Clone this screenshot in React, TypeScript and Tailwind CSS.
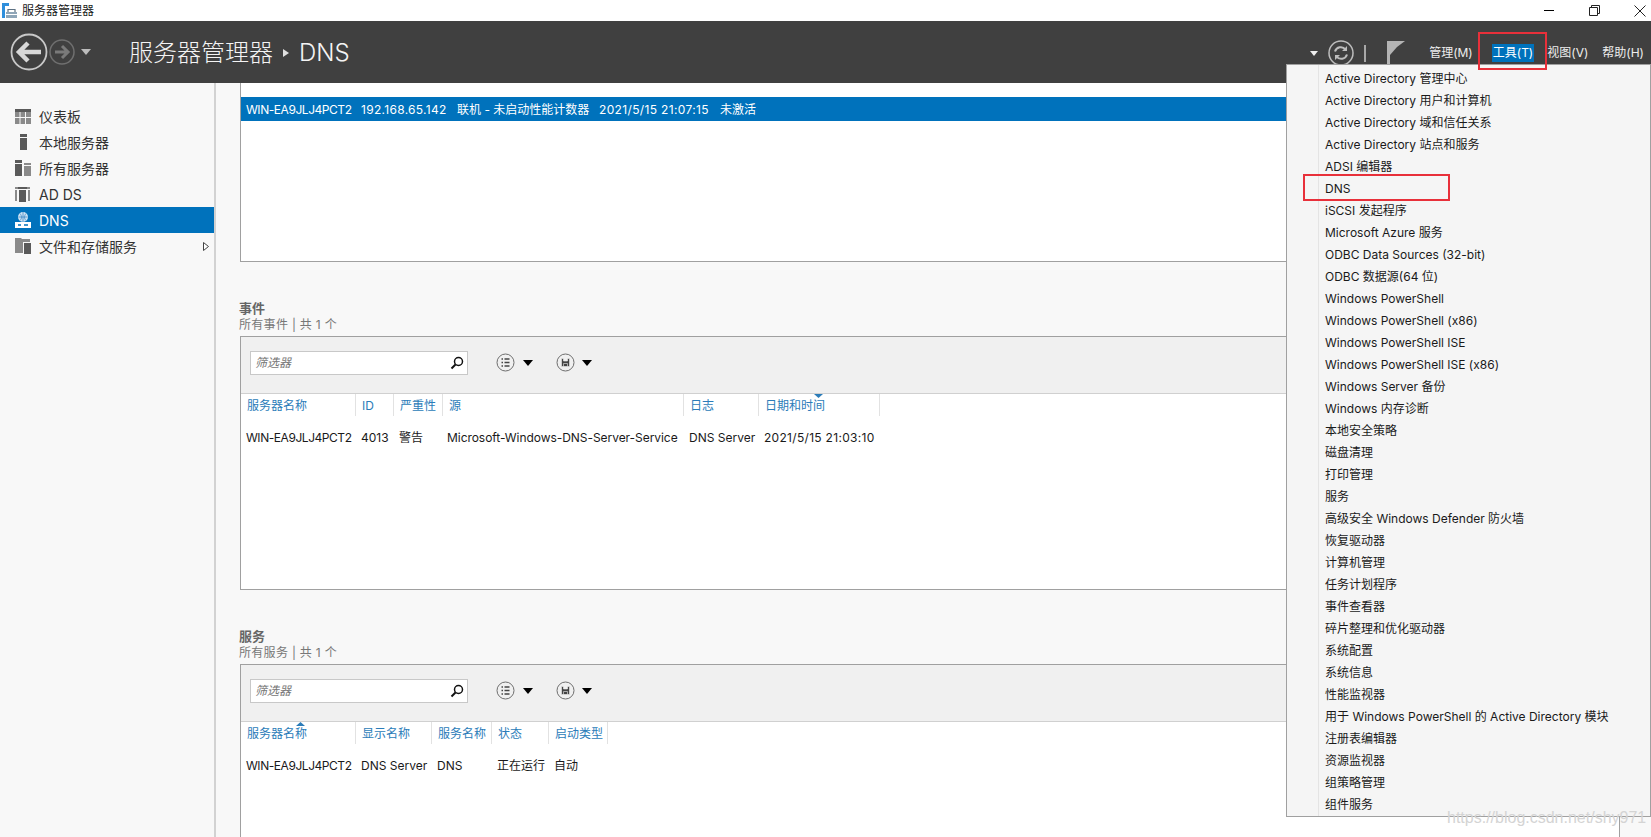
import React from "react"

// Server Manager – DNS page with the Tools menu open

const FONT = 'Inter, "Noto Sans CJK SC", sans-serif'

const NAV_ITEMS = [
  { label: "仪表板", icon: "dash" },
  { label: "本地服务器", icon: "local" },
  { label: "所有服务器", icon: "all" },
  { label: "AD DS", icon: "adds" },
  { label: "DNS", icon: "dns" },
  { label: "文件和存储服务", icon: "files" },
]

const MENU_ITEMS = [
  "Active Directory 管理中心",
  "Active Directory 用户和计算机",
  "Active Directory 域和信任关系",
  "Active Directory 站点和服务",
  "ADSI 编辑器",
  "DNS",
  "iSCSI 发起程序",
  "Microsoft Azure 服务",
  "ODBC Data Sources (32-bit)",
  "ODBC 数据源(64 位)",
  "Windows PowerShell",
  "Windows PowerShell (x86)",
  "Windows PowerShell ISE",
  "Windows PowerShell ISE (x86)",
  "Windows Server 备份",
  "Windows 内存诊断",
  "本地安全策略",
  "磁盘清理",
  "打印管理",
  "服务",
  "高级安全 Windows Defender 防火墙",
  "恢复驱动器",
  "计算机管理",
  "任务计划程序",
  "事件查看器",
  "碎片整理和优化驱动器",
  "系统配置",
  "系统信息",
  "性能监视器",
  "用于 Windows PowerShell 的 Active Directory 模块",
  "注册表编辑器",
  "资源监视器",
  "组策略管理",
  "组件服务",
]

interface Column {
  title: string
  width: number
  cell: string
  cellClass?: string
  sort?: "up" | "down"
}

const EVENT_COLUMNS: Column[] = [
  { title: "服务器名称", width: 115, cell: "WIN-EA9JLJ4PCT2", cellClass: "tracking-[-0.45px]" },
  { title: "ID", width: 38, cell: "4013" },
  { title: "严重性", width: 49, cell: "警告" },
  { title: "源", width: 241, cell: "Microsoft-Windows-DNS-Server-Service", cellClass: "tracking-[-0.05px] ml-[-1px]" },
  { title: "日志", width: 75, cell: "DNS Server" },
  { title: "日期和时间", width: 121, cell: "2021/5/15 21:03:10", cellClass: "tracking-[0.3px]", sort: "down" },
]

const SERVICE_COLUMNS: Column[] = [
  { title: "服务器名称", width: 115, cell: "WIN-EA9JLJ4PCT2", cellClass: "tracking-[-0.45px]", sort: "up" },
  { title: "显示名称", width: 76, cell: "DNS Server" },
  { title: "服务名称", width: 60, cell: "DNS" },
  { title: "状态", width: 57, cell: "正在运行" },
  { title: "启动类型", width: 59, cell: "自动" },
]

function NavIcon({ name }: { name: string }) {
  const c = "#5a5a5a"
  return (
    <svg width="18" height="18" viewBox="0 0 18 18" className="shrink-0">
      {name === "dash" && (
        <>
          <rect x="1" y="2" width="16" height="15" fill="#8a8a8a" />
          <rect x="1" y="2" width="16" height="3" fill={c} />
          <path d="M6 5v12M11.500 5v12M1 10.500h16" stroke="#f7f7f7" strokeWidth="1" />
        </>
      )}
      {name === "local" && (
        <>
          <rect x="6" y="1" width="7" height="3" fill={c} />
          <rect x="6" y="5" width="7" height="12" fill={c} />
        </>
      )}
      {name === "all" && (
        <>
          <rect x="1" y="1" width="7" height="3" fill={c} />
          <rect x="1" y="5" width="7" height="12" fill={c} />
          <rect x="10" y="4" width="7" height="2" fill="#8a8a8a" />
          <rect x="10" y="7" width="7" height="10" fill="#8a8a8a" />
        </>
      )}
      {name === "adds" && (
        <>
          <path d="M1 2h15v2H1zM1 5h2v11H1zM14 5h2v11h-2z" fill="#8a8a8a" />
          <rect x="4" y="2" width="9" height="2" fill={c} />
          <rect x="5" y="5" width="7" height="12" fill={c} />
        </>
      )}
      {name === "dns" && (
        <>
          <circle cx="9" cy="6" r="5" fill="#cfe3f3" />
          <path d="M4.500 6h9M9 1v10M6 2.500c2 2.500 2 5 0 7M12 2.500c-2 2.500-2 5 0 7" stroke="#3f88c5" strokeWidth="0.8" fill="none" />
          <rect x="1" y="11" width="16" height="6" fill="#fff" />
          <path d="M4 14h3M10 14h4" stroke="#0072bc" strokeWidth="1.500" />
        </>
      )}
      {name === "files" && (
        <>
          <path d="M1 1h6l1 1h8v3H1z" fill="#8a8a8a" />
          <rect x="1" y="5" width="8" height="11" fill="#8a8a8a" />
          <rect x="10" y="6" width="7" height="11" fill={c} />
        </>
      )}
    </svg>
  )
}

function Caret({ color = "#000", className = "" }: { color?: string; className?: string }) {
  return (
    <svg width="10" height="6" viewBox="0 0 10 6" className={className}>
      <path d="M0 0h10L5 6z" fill={color} />
    </svg>
  )
}

function CircleButton({ kind }: { kind: "list" | "save" }) {
  return (
    <svg width="19" height="19" viewBox="0 0 19 19">
      <circle cx="9.500" cy="9.500" r="8.500" fill="none" stroke="#6e6e6e" strokeWidth="1" />
      {kind === "list" ? (
        <path
          d="M5.500 6h1.500M5.500 9.500h1.500M5.500 13h1.500M8.500 6h5M8.500 9.500h5M8.500 13h5"
          stroke="#444"
          strokeWidth="1.500"
        />
      ) : (
        <path d="M5.500 5.500h8v8h-8zM7.500 5.500v2.500h4v-2.500M7.500 13.500v-3h4v3" fill="#444" stroke="#f0f0f0" strokeWidth="0.600" />
      )}
    </svg>
  )
}

function Section(props: { title: string; subtitle: string; columns: Column[]; height: string }) {
  return (
    <section className="mt-[38px]">
      <h2 className="text-[13px] leading-4 font-bold text-[#666] ml-[-1px]">{props.title}</h2>
      <p className="text-[12px] leading-4 mt-px tracking-[0.3px] text-[#777] ml-[-1px]">{props.subtitle}</p>
      <div className={`mt-[3px] border border-[#a0a0a0] bg-white ${props.height}`}>
        <div className="flex h-[57px] items-center border-b border-[#d0d0d0] bg-[#f0f0f0] pb-[5px] pl-[9px]">
          <div className="flex h-6 w-[218px] items-center justify-between border border-[#c8c8c8] bg-white pl-1 pr-[3px]">
            <span className="text-[12px] italic text-[#777]">筛选器</span>
            <svg width="14" height="14" viewBox="0 0 14 14">
              <circle cx="8.500" cy="5.500" r="4" fill="none" stroke="#111" strokeWidth="1.500" />
              <path d="M5.500 8.500L1.500 12.500" stroke="#111" strokeWidth="2" />
            </svg>
          </div>
          <div className="ml-[28px] flex items-center gap-[8px]">
            <CircleButton kind="list" />
            <Caret />
          </div>
          <div className="ml-[23px] flex items-center gap-[7px]">
            <CircleButton kind="save" />
            <Caret />
          </div>
        </div>
        <div className="flex h-[22px]">
          {props.columns.map((col) => (
            <div
              key={col.title}
              style={{ width: col.width }}
              className="relative shrink-0 border-r border-[#e2e2e2] pl-[6px] text-[12px] leading-[23px] text-[#2b7cb9]"
            >
              {col.sort && (
                <svg width="9" height="4" viewBox="0 0 9 4" className="absolute left-[55px] top-0">
                  <path d={col.sort === "up" ? "M0 4h9L4.500 0z" : "M0 0h9L4.500 4z"} fill="#2b7cb9" />
                </svg>
              )}
              {col.title}
            </div>
          ))}
        </div>
        <div className="mt-[11px] flex h-[22px]">
          {props.columns.map((col) => (
            <div
              key={col.title}
              style={{ width: col.width }}
              className="shrink-0 whitespace-nowrap pl-[5px] text-[12px] leading-[22px] text-[#1a1a1a]"
            >
              <span className={col.cellClass}>{col.cell}</span>
            </div>
          ))}
        </div>
      </div>
    </section>
  )
}

export default function App() {
  return (
    <div
      className="relative flex h-[837px] w-[1651px] flex-col overflow-hidden bg-white"
      style={{ fontFamily: FONT }}
    >
      {/* Title bar */}
      <div className="flex h-[21px] shrink-0 items-center justify-between bg-white">
        <div className="flex items-center">
          <svg width="16" height="16" viewBox="0 0 16 16" className="ml-[2px]">
            <rect x="0" y="0" width="7" height="3" fill="#2f8fdc" />
            <rect x="0" y="3" width="3" height="12" fill="#2f8fdc" />
            <path d="M4 9h11v6H4z" fill="#8fa6b8" />
            <path d="M6 9V6.500h7V9" fill="none" stroke="#5d7183" strokeWidth="1.200" />
            <path d="M4 11.500h11" stroke="#fff" strokeWidth="1" />
          </svg>
          <span className="ml-[4px] text-[12px] text-[#1a1a1a]">服务器管理器</span>
        </div>
        <div className="flex items-center">
          <span className="h-px w-[10px] bg-black" />
          <svg width="11" height="11" viewBox="0 0 11 11" className="ml-[35px]">
            <path d="M.500 2.500h8v8h-8zM2.500 2.500v-2h8v8h-2" fill="none" stroke="#222" />
          </svg>
          <svg width="12" height="12" viewBox="0 0 12 12" className="mx-[5px] ml-[34px]">
            <path d="M.500.500l11 11M11.500.500l-11 11" stroke="#222" />
          </svg>
        </div>
      </div>

      {/* Header */}
      <header className="flex h-[62px] shrink-0 items-center justify-between bg-[#404040] text-white">
        <div className="flex items-center">
          <svg width="38" height="38" viewBox="0 0 38 38" className="ml-[10px]">
            <circle cx="19" cy="19" r="17.500" fill="none" stroke="#c8c8c8" strokeWidth="1.800" />
            <path d="M31 19H10M18 10l-9 9 9 9" fill="none" stroke="#d8d8d8" strokeWidth="4.500" />
          </svg>
          <svg width="26" height="26" viewBox="0 0 26 26" className="ml-[1px]">
            <circle cx="13" cy="13" r="12" fill="none" stroke="#6f6f6f" strokeWidth="1.500" />
            <path d="M6 13h13M13 7l6 6-6 6" fill="none" stroke="#7a7a7a" strokeWidth="3" />
          </svg>
          <Caret color="#bcbcbc" className="ml-[6px]" />
          <h1 className="ml-[38px] flex items-center pt-[2px] text-[24px] font-light leading-none text-[#f4f4f4]">
            服务器管理器
            <svg width="6" height="8" viewBox="0 0 6 8" className="mx-[10px]">
              <path d="M0 0l6 4-6 4z" fill="#e0e0e0" />
            </svg>
            DNS
          </h1>
        </div>
        <div className="flex items-center pt-[2px] text-[12px] text-[#eee]">
          <svg width="8" height="5" viewBox="0 0 8 5">
            <path d="M0 0h8L4 5z" fill="#eee" />
          </svg>
          <svg width="26" height="26" viewBox="0 0 26 26" className="ml-[10px]">
            <circle cx="13" cy="13" r="12" fill="none" stroke="#bdbdbd" strokeWidth="1.500" />
            <path d="M7 11.500a6 6 0 0 1 10.500-2M19 14.500a6 6 0 0 1-10.500 2" fill="none" stroke="#bdbdbd" strokeWidth="2" />
            <path d="M19 6v5h-5zM7 20v-5h5z" fill="#bdbdbd" />
          </svg>
          <span className="ml-[10px] h-[17px] w-[2px] bg-[#a8a8a8]" />
          <svg width="18" height="24" viewBox="0 0 18 24" className="ml-[21px]">
            <rect x="0" y="0" width="3" height="24" fill="#b4b4b4" />
            <path d="M3 0h15L10 6 3 14z" fill="#b4b4b4" />
          </svg>
          <span className="ml-[24px]">管理(M)</span>
          <span className="ml-[19px] bg-[#0072bc] px-[1px] leading-[18px] text-white">工具(T)</span>
          <span className="ml-[13px]">视图(V)</span>
          <span className="ml-[14px] mr-[7px]">帮助(H)</span>
        </div>
      </header>

      <div className="flex min-h-0 flex-1">
        {/* Sidebar */}
        <nav className="w-[216px] shrink-0 border-r-2 border-[#d2d2d2] bg-[#f8f8f8] pt-[20px]">
          {NAV_ITEMS.map((item) => (
            <div
              key={item.label}
              className={
                item.label === "DNS"
                  ? "flex h-[26px] items-center gap-[7px] bg-[#0072bc] pl-[14px] text-[14px] text-white"
                  : "flex h-[26px] items-center gap-[7px] pl-[14px] text-[14px] text-[#333]"
              }
            >
              <NavIcon name={item.icon} />
              <span className="flex-1">{item.label}</span>
              {item.icon === "files" && (
                <svg width="6" height="9" viewBox="0 0 6 9" className="mr-[5px]">
                  <path d="M.500.500l5 4-5 4z" fill="#fff" stroke="#444" />
                </svg>
              )}
            </div>
          ))}
        </nav>

        {/* Main content */}
        <main className="min-w-0 flex-1 bg-[#f8f8f8] pl-[24px] pr-[31px]">
          <div className="h-[179px] border-x border-b border-[#a0a0a0] bg-white pt-[14px]">
            <div className="flex h-6 items-center whitespace-nowrap bg-[#0072bc] pl-[5px] pt-px text-[12px] text-white">
              <span className="w-[115px] tracking-[-0.45px]">WIN-EA9JLJ4PCT2</span>
              <span className="w-[96px] tracking-[0.3px]">192.168.65.142</span>
              <span className="w-[142px]">联机 - 未启动性能计数器</span>
              <span className="w-[121px] tracking-[0.35px]">2021/5/15 21:07:15</span>
              <span>未激活</span>
            </div>
          </div>
          <Section title="事件" subtitle="所有事件 | 共 1 个" columns={EVENT_COLUMNS} height="h-[254px]" />
          <Section title="服务" subtitle="所有服务 | 共 1 个" columns={SERVICE_COLUMNS} height="h-[300px]" />
        </main>
      </div>

      {/* Tools menu */}
      <div className="absolute left-[1286px] top-[64px] flex h-[753px] w-[365px] border border-[#a0a0a0] bg-[#f5f5f5] pt-[3px]">
        <div className="absolute bottom-0 left-[31px] top-0 w-px bg-[#e4e4e4]" />
        <ul className="pl-[38px]">
          {MENU_ITEMS.map((item) => (
            <li key={item} className="h-[22px] whitespace-nowrap text-[12px] leading-[22px] text-[#1a1a1a]">
              {item}
            </li>
          ))}
        </ul>
      </div>

      {/* Red annotation boxes and watermark */}
      <div className="absolute left-[1478px] top-[32px] h-[38px] w-[69px] border-2 border-[#e8303a]" />
      <div className="absolute left-[1303px] top-[174px] h-[27px] w-[147px] border-2 border-[#e8303a]" />
      <div
        className="absolute left-[1447px] top-[806px] text-[16px] text-[#d4d4d4]"
        style={{ fontFamily: '"Liberation Sans", sans-serif' }}
      >
        https://blog.csdn.net/shy971
      </div>
    </div>
  )
}
